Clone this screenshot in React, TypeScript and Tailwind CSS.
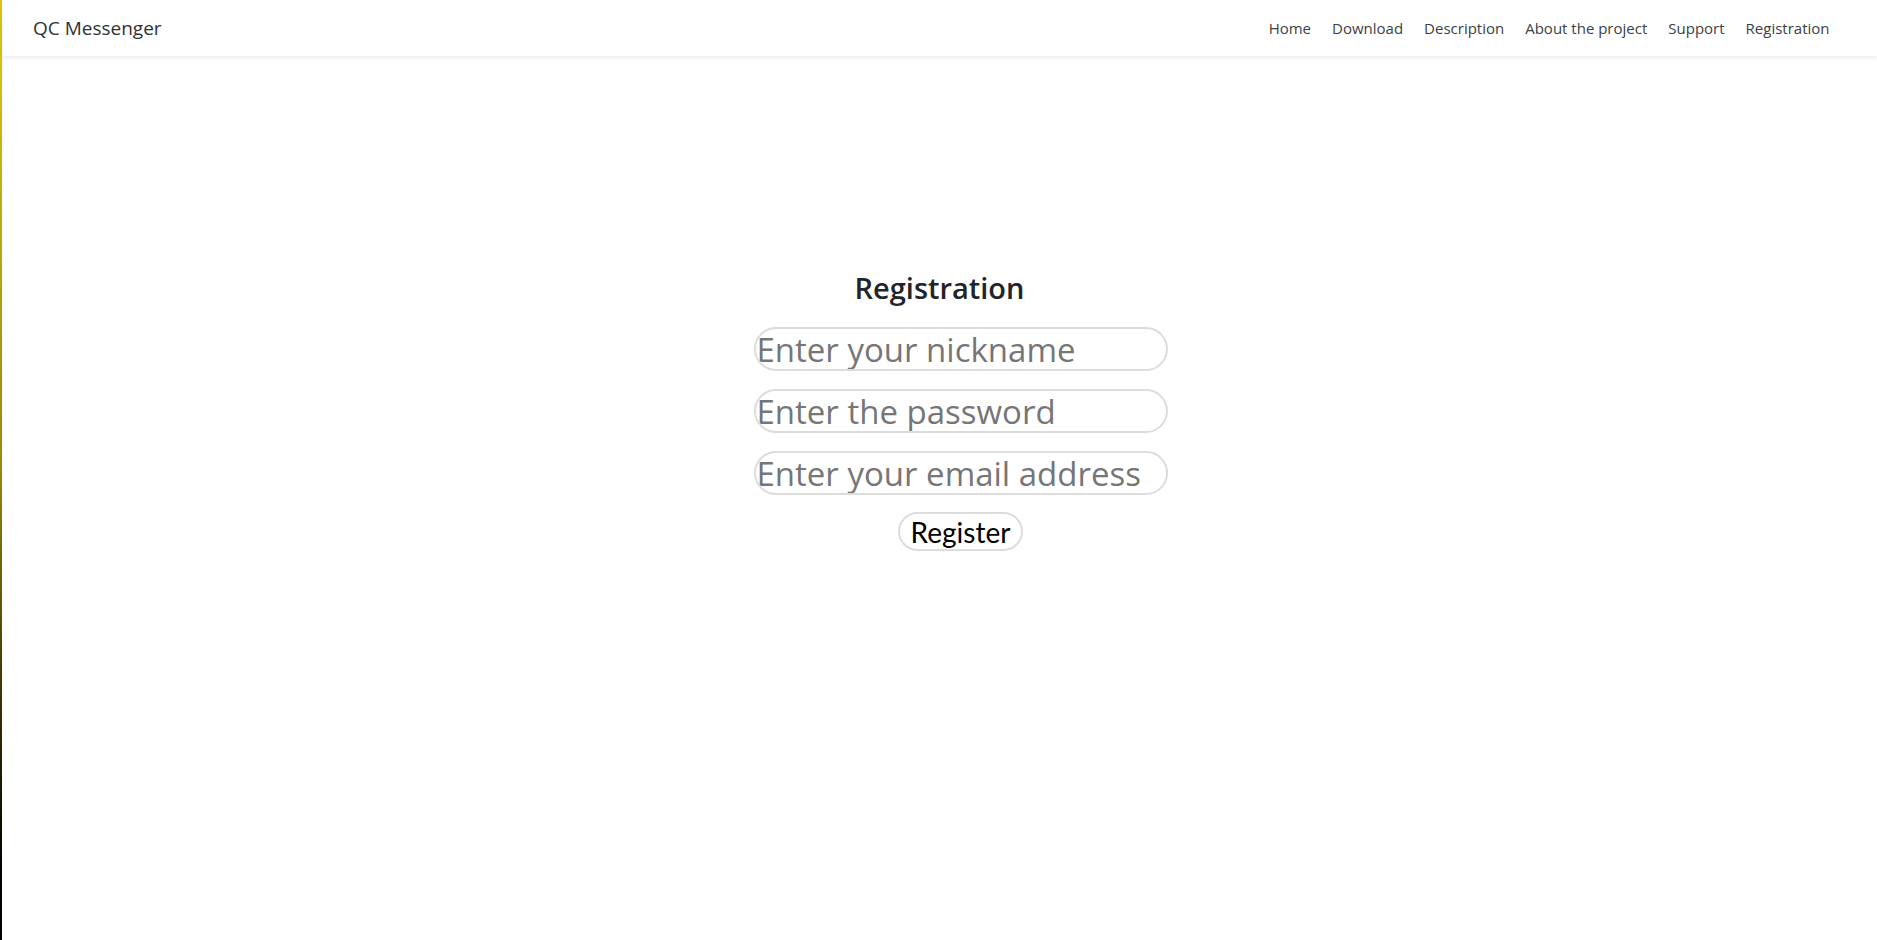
import { useState } from "react";

const navLinks = [
  "Home",
  "Download",
  "Description",
  "About the project",
  "Support",
  "Registration",
];

export default function App() {
  const [nick, setNick] = useState("");
  const [pass, setPass] = useState("");
  const [email, setEmail] = useState("");

  return (
    <div className="flex min-h-[940px] bg-white">
      <div className="w-[2px] shrink-0 bg-gradient-to-b from-[#e6c800] via-[#9a8a00] to-black" />
      <div className="flex-1 min-w-0">
        <nav className="h-14 flex items-center justify-between pl-[31px] pr-[37px] bg-white shadow-[0_2px_4px_rgba(0,0,0,0.08)] font-['Open_Sans',sans-serif]">
          <a className="text-[19px] text-[#2f3237]">QC Messenger</a>
          <ul className="flex items-center">
            {navLinks.map((l) => (
              <li key={l}>
                <a className="block px-[10.5px] text-[15px] text-[#3b3f46]">{l}</a>
              </li>
            ))}
          </ul>
        </nav>

        <main className="flex flex-col items-center pt-[214px]">
          <h2 className="font-['Open_Sans',sans-serif] font-semibold text-[29px] leading-[36px] text-[#212529]">
            Registration
          </h2>
          <form
            className="ml-[42px] mt-[21px] flex flex-col items-center gap-[18px]"
            onSubmit={(e) => e.preventDefault()}
          >
            <Field
              placeholder="Enter your nickname"
              value={nick}
              onChange={setNick}
            />
            <Field
              placeholder="Enter the password"
              value={pass}
              onChange={setPass}
              type="password"
            />
            <Field
              placeholder="Enter your email address"
              value={email}
              onChange={setEmail}
              type="email"
            />
            <button
              type="submit"
              className="-mt-px h-[39px] px-[11px] rounded-full border-2 border-[#dcdcdc] bg-white font-['Lato',sans-serif] text-[28px] leading-none text-black"
            >
              Register
            </button>
          </form>
        </main>
      </div>
    </div>
  );
}

function Field({
  placeholder,
  value,
  onChange,
  type = "text",
}: {
  placeholder: string;
  value: string;
  onChange: (v: string) => void;
  type?: string;
}) {
  return (
    <input
      type={type}
      value={value}
      placeholder={placeholder}
      onChange={(e) => onChange(e.target.value)}
      className="w-[414px] h-[44px] px-px rounded-full border-2 border-[#dcdcdc] font-['Open_Sans',sans-serif] text-[33px] leading-none text-black placeholder:text-[#767676] outline-none"
    />
  );
}
